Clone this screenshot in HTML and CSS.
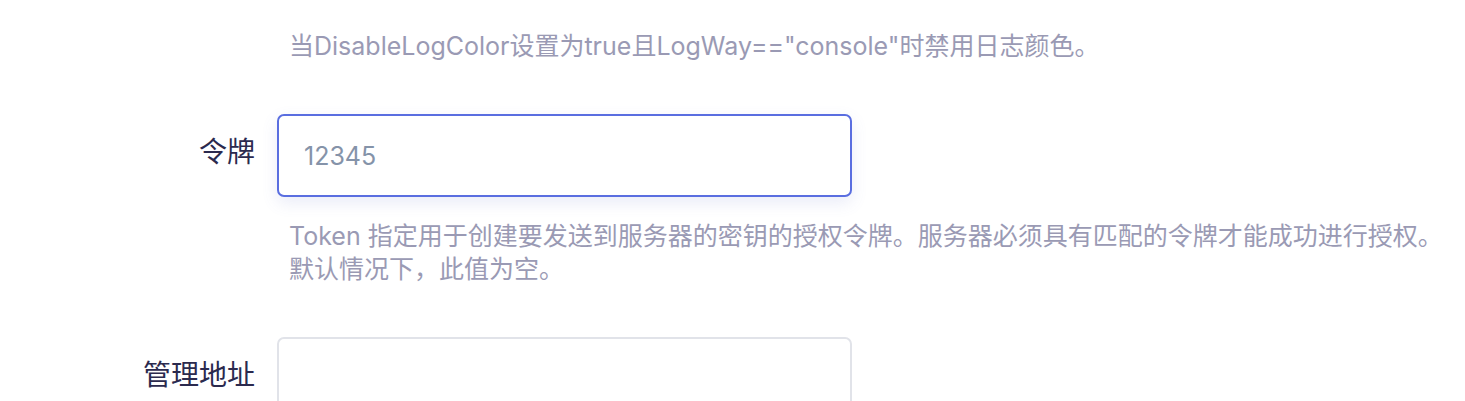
FILE: index.html
```html
<!DOCTYPE html>
<html lang="zh-CN">
<head>
<meta charset="utf-8">
<title>设置</title>
<link rel="stylesheet" href="styles.css">
</head>
<body>
<form class="form">
  <div class="item item-partial">
    <div class="label"></div>
    <div class="control">
      <p class="help">当DisableLogColor设置为true且LogWay=="console"时禁用日志颜色。</p>
    </div>
  </div>
  <div class="item">
    <label class="label" for="token">令牌</label>
    <div class="control">
      <input id="token" class="input input-focus" type="text" value="12345">
      <p class="help">Token 指定用于创建要发送到服务器的密钥的授权令牌。服务器必须具有匹配的令牌才能成功进行授权。<br>默认情况下，此值为空。</p>
    </div>
  </div>
  <div class="item">
    <label class="label" for="addr">管理地址</label>
    <div class="control">
      <input id="addr" class="input" type="text" value="">
    </div>
  </div>
</form>
</body>
</html>
```

FILE: styles.css
```css
html, body {
  margin: 0;
  padding: 0;
  background: #ffffff;
  overflow: hidden;
}

body {
  font-family: Inter, "Noto Sans CJK SC", sans-serif;
  width: 1465px;
  height: 401px;
}

.form {
  display: flex;
  flex-direction: column;
  gap: 51px;
  padding-top: 30px;
}

.item {
  display: grid;
  grid-template-columns: 255px 1fr;
  column-gap: 22px;
  align-items: start;
}

.label {
  text-align: right;
  font-size: 28px;
  line-height: 76px;
  color: #2b2a4e;
  white-space: nowrap;
}

.item-partial .label {
  line-height: 33px;
}

.control {
  display: flex;
  flex-direction: column;
  min-width: 0;
}

.input {
  box-sizing: border-box;
  width: 575px;
  height: 83px;
  margin: 0;
  padding: 0 25px;
  border: 2px solid #e1e3e9;
  border-radius: 7px;
  background: #ffffff;
  font-family: Inter, "Noto Sans CJK SC", sans-serif;
  font-size: 25px;
  color: #8593a9;
  outline: none;
}

.input-focus {
  border-color: #5a6ee0;
  box-shadow: 0 6px 16px rgba(90, 110, 200, 0.13);
}

.help {
  margin: 0;
  padding-left: 12px;
  font-size: 25px;
  line-height: 33px;
  color: #9a9ab4;
  white-space: nowrap;
}

.input + .help {
  margin-top: 23px;
}
```
